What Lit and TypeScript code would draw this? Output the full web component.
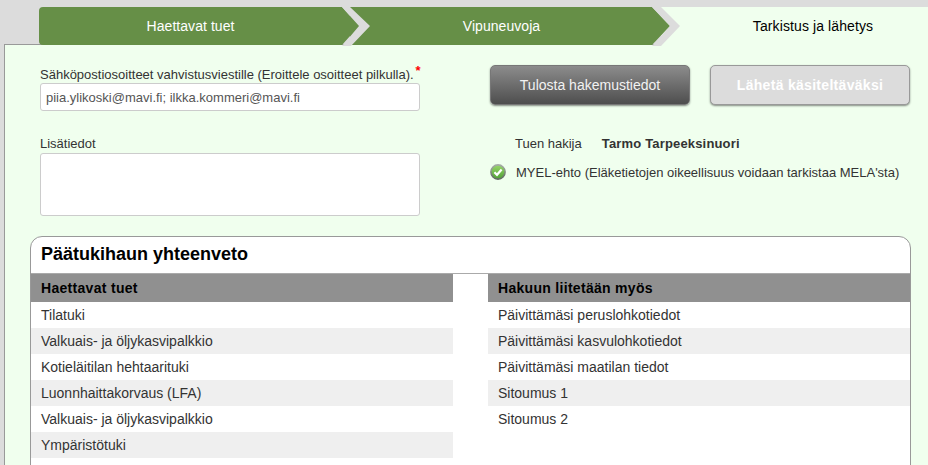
import { LitElement, html, css, svg } from "lit";
import { customElement } from "lit/decorators.js";

const LEFT = ["Tilatuki", "Valkuais- ja öljykasvipalkkio", "Kotieläitilan hehtaarituki", "Luonnhaittakorvaus (LFA)", "Valkuais- ja öljykasvipalkkio", "Ympäristötuki", ""];
const RIGHT = ["Päivittämäsi peruslohkotiedot", "Päivittämäsi kasvulohkotiedot", "Päivittämäsi maatilan tiedot", "Sitoumus 1", "Sitoumus 2"];

@customElement("app-root")
export class AppRoot extends LitElement {
  static styles = css`
    :host {
      display: block;
      width: 928px;
      height: 465px;
      overflow: hidden;
      background: #dcdcdc;
      font-family: "Liberation Sans", Arial, sans-serif;
      font-size: 14px;
      color: #333;
    }
    .tabs {
      display: flex;
      padding: 7px 0 0 39px;
      position: relative;
      z-index: 1;
      width: max-content;
    }
    .tab {
      position: relative;
      flex: none;
      height: 38px;
      width: 311px;
      color: #fff;
    }
    .tab svg {
      position: absolute;
      left: 0;
      top: 0;
      width: 331px;
      height: 39px;
      overflow: visible;
    }
    .tab span {
      position: relative;
      display: flex;
      align-items: center;
      justify-content: center;
      width: 303px;
      height: 38px;
      padding-bottom: 1px;
      box-sizing: border-box;
      letter-spacing: 0.05px;
    }
    .t1 { z-index: 3; }
    .t2 { z-index: 2; }
    .t3 { z-index: 1; width: 304px; background: #f0ffee; color: #000; }
    .t3 span { width: 304px; letter-spacing: 0.1px; }
    .panel {
      margin: -1px 0 0 4px;
      border-left: 1px solid #999;
      border-top: 1px solid #999;
      background: #f0ffee;
      padding: 20px 0 0 35px;
      height: 500px;
      box-sizing: border-box;
    }
    .form {
      display: grid;
      grid-template-columns: 380px 420px;
      column-gap: 70px;
      font-size: 13px;
    }
    .left { padding-top: 2px; display: flex; flex-direction: column; }
    label { display: block; line-height: 16px; height: 16px; white-space: nowrap; }
    .star {
      color: #f00;
      font-size: 13px;
      font-weight: bold;
      line-height: 0;
      position: relative;
      top: -4px;
      margin-left: 2px;
    }
    input, textarea {
      display: block;
      width: 380px;
      box-sizing: border-box;
      border: 1px solid #ccc;
      border-radius: 3px;
      background: #fff;
      font: inherit;
      color: #555;
      outline: none;
      resize: none;
      margin: 0;
    }
    input { height: 28px; padding: 0 5px; }
    textarea { height: 63px; padding: 4px 5px; }
    .l2 { margin-top: 25px; margin-bottom: 1px; }
    .buttons { display: flex; gap: 20px; font-size: 14px; }
    .btn {
      width: 200px;
      height: 40px;
      box-sizing: border-box;
      border-radius: 5px;
      display: flex;
      align-items: center;
      justify-content: center;
      padding-bottom: 1px;
      box-shadow: 0 1px 2px rgba(0, 0, 0, 0.45);
    }
    .print {
      background: linear-gradient(#8c8c8c, #4e4e4e);
      border: 1px solid #777;
      color: #f2f2f2;
    }
    .send {
      background: #dcdcdc;
      border: 1px solid #999;
      color: #fff;
      font-weight: bold;
      letter-spacing: 0.3px;
    }
    .applicant {
      display: flex;
      gap: 20px;
      margin: 31px 0 0 25px;
      line-height: 16px;
    }
    .applicant b { color: #333; letter-spacing: 0.17px; }
    .cond {
      display: flex;
      align-items: center;
      gap: 10px;
      margin-top: 12px;
      height: 16px;
      white-space: nowrap;
    }
    .cond svg { width: 16px; height: 16px; flex: none; }
    .card {
      margin: 20px 0 0 -10px;
      width: 881px;
      box-sizing: border-box;
      background: #fff;
      border: 1px solid #999;
      border-radius: 12px 12px 0 0;
      height: 300px;
    }
    .title {
      height: 37px;
      box-sizing: border-box;
      border-bottom: 1px solid #aaa;
      font-size: 18px;
      font-weight: bold;
      color: #000;
      padding: 0 0 1px 10px;
      display: flex;
      align-items: center;
    }
    .cols {
      display: grid;
      grid-template-columns: 422px 422px;
      column-gap: 35px;
    }
    .head {
      height: 28px;
      background: #909090;
      color: #000;
      font-weight: bold;
      letter-spacing: 0.3px;
      padding-left: 10px;
      display: flex;
      align-items: center;
    }
    .row {
      height: 26px;
      padding-left: 10px;
      display: flex;
      align-items: center;
    }
    .row:nth-child(even) { background: #efefef; }
  `;

  render() {
    const body = (d: string) => svg`<path d=${d} fill="#668f47"></path>`;
    const chev = (p: string) => svg`<polygon points=${p} fill="#dcdcdc"></polygon>`;
    return html`
      <div class="tabs">
        <div class="tab t1">
          <svg viewBox="0 0 331 39">
            ${body("M4 0H303L320 19L303 38H4Q0 38 0 34V4Q0 0 4 0Z")}
            ${chev("303,0 311,0 331,19 312,39 303,39 320,19")}
          </svg>
          <span>Haettavat tuet</span>
        </div>
        <div class="tab t2">
          <svg viewBox="0 0 331 39">
            ${body("M0 0H302L320 19L302 38H0Z")}
            ${chev("302,0 311,0 330,19 311,39 302,39 320,19")}
          </svg>
          <span>Vipuneuvoja</span>
        </div>
        <div class="tab t3"><span>Tarkistus ja lähetys</span></div>
      </div>
      <div class="panel">
        <div class="form">
          <div class="left">
            <label>Sähköpostiosoitteet vahvistusviestille (Eroittele osoitteet pilkulla).<span class="star">*</span></label>
            <input value="piia.ylikoski@mavi.fi; ilkka.kommeri@mavi.fi" />
            <label class="l2">Lisätiedot</label>
            <textarea></textarea>
          </div>
          <div>
            <div class="buttons">
              <div class="btn print">Tulosta hakemustiedot</div>
              <div class="btn send">Lähetä käsiteltäväksi</div>
            </div>
            <div class="applicant"><span>Tuen hakija</span><b>Tarmo Tarpeeksinuori</b></div>
            <div class="cond">
              <svg viewBox="0 0 16 16">
                <defs>
                  <linearGradient id="g" x1="0" y1="0" x2="0" y2="1">
                    <stop offset="0" stop-color="#9ad86a"></stop>
                    <stop offset="1" stop-color="#4f9f36"></stop>
                  </linearGradient>
                  <linearGradient id="r" x1="0" y1="0" x2="0" y2="1">
                    <stop offset="0" stop-color="#a5ada5"></stop>
                    <stop offset="1" stop-color="#5f685f"></stop>
                  </linearGradient>
                </defs>
                <circle cx="8" cy="8" r="7.1" fill="url(#g)" stroke="url(#r)" stroke-width="1.6"></circle>
                <path d="M4.4 8.2L7 10.8L11.6 5.6" fill="none" stroke="#fff" stroke-width="2.2"></path>
              </svg>
              <span>MYEL-ehto (Eläketietojen oikeellisuus voidaan tarkistaa MELA'sta)</span>
            </div>
          </div>
        </div>
        <div class="card">
          <div class="title">Päätukihaun yhteenveto</div>
          <div class="cols">
            <div>
              <div class="head">Haettavat tuet</div>
              <div>${LEFT.map((t) => html`<div class="row">${t}</div>`)}</div>
            </div>
            <div>
              <div class="head">Hakuun liitetään myös</div>
              <div>${RIGHT.map((t) => html`<div class="row">${t}</div>`)}</div>
            </div>
          </div>
        </div>
      </div>
    `;
  }
}
